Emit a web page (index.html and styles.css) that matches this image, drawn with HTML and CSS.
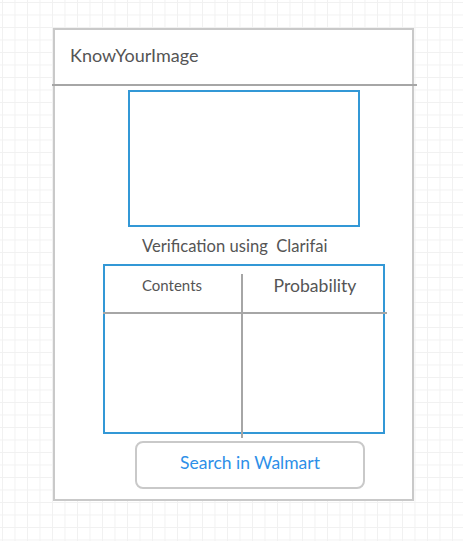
FILE: index.html
```html
<!DOCTYPE html>
<html lang="en">
<head>
<meta charset="utf-8">
<title>KnowYourImage</title>
<link rel="stylesheet" href="styles.css">
</head>
<body>
<div class="canvas">
  <div class="frame">
    <div class="header">KnowYourImage</div>
    <div class="image-box"></div>
    <div class="caption">Verification using  Clarifai</div>
    <div class="table">
      <div class="thead">
        <div class="th th-contents">Contents</div>
        <div class="th th-prob">Probability</div>
      </div>
      <div class="hline"></div>
      <div class="vline"></div>
    </div>
    <div class="button">Search in Walmart</div>
  </div>
</div>
</body>
</html>
```
FILE: styles.css
```css
html, body {
  margin: 0;
  padding: 0;
}
body {
  width: 463px;
  height: 541px;
  overflow: hidden;
  background-color: #ffffff;
  background-image:
    linear-gradient(to right, #f1f1f1 1px, transparent 1px),
    linear-gradient(to bottom, #f1f1f1 1px, transparent 1px);
  background-size: 12.5px 12.5px;
  background-position: 2px 2px;
  font-family: Lato, "Open Sans", "Liberation Sans", sans-serif;
  color: #555555;
}
.canvas {
  padding: 28px 0 0 53px;
}
.frame {
  width: 361px;
  height: 473px;
  box-sizing: border-box;
  border: 2px solid #c9c9c9;
  background: #ffffff;
  display: flex;
  flex-direction: column;
}
.header {
  height: 56px;
  box-sizing: border-box;
  padding: 15px 0 0 18px;
  margin: 0 -5px 0 -3px;
  font-size: 18px;
  line-height: 20px;
  border-bottom: 2px solid #a6a6a6;
}
.image-box {
  width: 232px;
  height: 137px;
  box-sizing: border-box;
  border: 2px solid #3398d6;
  margin: 4px 0 0 73px;
}
.caption {
  white-space: pre;
  font-size: 16.6px;
  line-height: 20px;
  margin: 9px 0 0 87px;
}
.table {
  position: relative;
  width: 282px;
  height: 170px;
  box-sizing: border-box;
  border: 2px solid #3398d6;
  margin: 8px 0 0 48px;
}
.thead {
  display: grid;
  grid-template-columns: 136px 1fr;
  height: 46px;
}
.th {
  text-align: center;
}
.th-contents {
  font-size: 15px;
  line-height: 16px;
  padding-top: 11px;
  padding-right: 2px;
}
.th-prob {
  font-size: 17.6px;
  line-height: 20px;
  padding-top: 10px;
  padding-left: 6px;
}
.hline {
  position: absolute;
  left: -2px;
  top: 46px;
  width: 284px;
  height: 2px;
  background: #a6a6a6;
}
.vline {
  position: absolute;
  left: 136px;
  top: 8px;
  width: 2px;
  height: 164px;
  background: #a6a6a6;
}
.button {
  width: 230px;
  height: 48px;
  box-sizing: border-box;
  border: 2px solid #c9c9c9;
  border-radius: 8px;
  margin: 7px 0 0 80px;
  padding-top: 10px;
  text-align: center;
  font-size: 17.5px;
  line-height: 20px;
  color: #2d8fe8;
}
```
